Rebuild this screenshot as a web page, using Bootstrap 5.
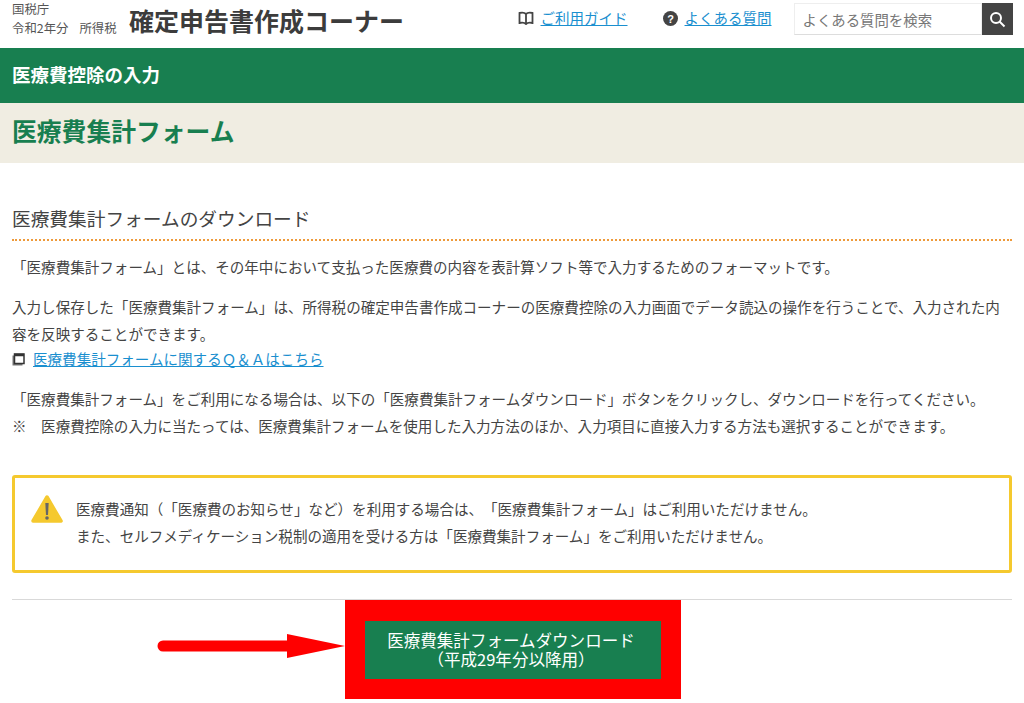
<!DOCTYPE html>
<html lang="ja">
<head>
    <meta charset="UTF-8">
    <meta name="viewport" content="width=device-width, initial-scale=1.0">
    <title>医療費集計フォーム</title>

    <link href="https://cdn.jsdelivr.net/npm/bootstrap@5.3.0/dist/css/bootstrap.min.css" rel="stylesheet">

    <style>
        body {
            font-family: "Noto Sans CJK JP", "Liberation Sans", sans-serif;
            font-size: 14.56px;
            color: #444;
            height: 703px;
            overflow: hidden;
            text-spacing-trim: space-all;
            font-feature-settings: "chws" 0, "palt" 0;
        }
        a { color: #1a8fcf; }
        .top-head { height: 48px; padding: 0 12px; }
        .agency { font-size: 12.4px; line-height: 19px; color: #555; width: 117px; flex-shrink: 0; }
        .agency span { margin-right: 11px; }
        .app-title { font-size: 25px; font-weight: 700; color: #3c3c3c; line-height: 1; padding-top: 8px; }
        .top-links { margin-left: 114px; font-size: 14.5px; margin-top: -12px; white-space: nowrap; column-gap: 6.5px; }
        .q-icon { margin-left: 29px; }
        .search-box { width: 219px; height: 32px; margin-left: 22px; margin-top: 3px; flex-shrink: 0; }
        .search-box input {
            border: 1px solid #eee; border-bottom-color: #ddd; border-radius: 0; font-size: 14.4px;
            height: 32px; padding: 0 8px; box-shadow: none;
        }
        .search-box input::placeholder { color: #777; }
        .search-btn { width: 31px; height: 32px; background: #444; flex-shrink: 0; border: 0; padding: 0; }
        .page-band { background: #187f50; color: #fff; height: 55px; font-size: 18.5px; font-weight: 700; padding: 0 12px 2px; }
        .title-band { background: #f0ede2; height: 60px; padding: 0 12px 4px; }
        .title-band h1 { font-size: 24.8px; font-weight: 700; color: #187f50; margin: 0; }
        .content-wrap { padding: 0 12px; }
        .sec-head {
            font-size: 18.7px; font-weight: 400; color: #444; margin: 41px 0 0;
            padding-bottom: 8px; line-height: 27px; border-bottom: 2px dotted #ee9a3a;
        }
        .lines { line-height: 26.5px; margin: 0; white-space: nowrap; }
        .para-a { margin-top: 13px; }
        .para-b { margin-top: 13.5px; }
        .para-c { margin-top: 13.5px; }
        .ref-link { margin-top: -1px; }
        .notice {
            border: 3px solid #f5c92e; border-radius: 3px; height: 98px; margin-top: 36px; padding: 17px 0 0 16px;
        }
        .notice svg { flex-shrink: 0; }
        .notice .lines { margin: 1px 0 0 13px; }
        .sep { border-top: 1px solid #d9d9d9; margin: 26px 0 0; }
        .dl-row { padding-left: 145px; }
        .arrow-mark { margin-bottom: 8px; }
        .red-frame { background: #f00; width: 336px; height: 99px; }
        .dl-btn {
            background: #187f50; color: #fff; width: 296px; height: 58px; border: 0; border-radius: 0;
            font-size: 16.55px; line-height: 19px; padding: 0 4px 0 0;
        }
        .dl-btn span { display: block; white-space: nowrap; }
    </style>
</head>
<body>

    <div class="top-head d-flex align-items-start">
        <div class="agency">
            <div>国税庁</div>
            <div class="text-nowrap"><span>令和2年分</span>所得税</div>
        </div>
        <div class="app-title text-nowrap">確定申告書作成コーナー</div>

        <div class="top-links d-flex align-items-center align-self-center">
            <svg width="16" height="14" viewBox="0 0 16 14" fill="none" stroke="#444" stroke-width="1.8"><path d="M8 3C6.500 1.500 4 1.500 1.500 2V12C4 11.500 6.500 11.500 8 13C9.500 11.500 12 11.500 14.500 12V2C12 1.500 9.500 1.500 8 3ZM8 3V13"/></svg>
            <a href="#">ご利用ガイド</a>
            <svg class="q-icon" width="15" height="15" viewBox="0 0 15 15"><circle cx="7.500" cy="7.500" r="7.500" fill="#444"/><text x="7.500" y="11.500" font-size="11" font-weight="700" fill="#fff" text-anchor="middle" font-family="Liberation Sans">?</text></svg>
            <a href="#">よくある質問</a>
        </div>

        <div class="search-box d-flex">
            <input type="text" class="form-control" placeholder="よくある質問を検索">
            <button class="search-btn d-flex align-items-center justify-content-center" type="button" aria-label="検索">
                <svg width="17" height="17" viewBox="0 0 17 17" fill="none" stroke="#fff" stroke-width="2"><circle cx="7" cy="7" r="5"/><path d="M10.500 10.500L15.500 15.500"/></svg>
            </button>
        </div>
    </div>

    <div class="page-band d-flex align-items-center">医療費控除の入力</div>
    <div class="title-band d-flex align-items-center">
        <h1>医療費集計フォーム</h1>
    </div>

    <div class="content-wrap">
        <h2 class="sec-head">医療費集計フォームのダウンロード</h2>

        <p class="lines para-a">「医療費集計フォーム」とは、その年中において支払った医療費の内容を表計算ソフト等で入力するためのフォーマットです。</p>

        <p class="lines para-b">入力し保存した「医療費集計フォーム」は、所得税の確定申告書作成コーナーの医療費控除の入力画面でデータ読込の操作を行うことで、入力された内<br>容を反映することができます。</p>
        <div class="d-flex align-items-center gap-2 lines ref-link">
            <svg width="13" height="13" viewBox="0 0 13 13" fill="none"><rect x="0.500" y="2.500" width="10" height="10" fill="#777"/><rect x="2.500" y="1" width="9.500" height="9.500" fill="#fff" stroke="#333" stroke-width="1.500"/><path d="M2 2H12" stroke="#333" stroke-width="2.500"/></svg>
            <a href="#">医療費集計フォームに関するＱ＆Ａはこちら</a>
        </div>

        <p class="lines para-c">「医療費集計フォーム」をご利用になる場合は、以下の「医療費集計フォームダウンロード」ボタンをクリックし、ダウンロードを行ってください。<br>※　医療費控除の入力に当たっては、医療費集計フォームを使用した入力方法のほか、入力項目に直接入力する方法も選択することができます。</p>

        <div class="notice d-flex align-items-start">
            <svg width="32" height="29" viewBox="0 0 32 29"><path d="M16 2L30 26H2Z" fill="#f5c92e" stroke="#f5c92e" stroke-width="3.500" stroke-linejoin="round"/><path d="M14.300 8H17.700L17 20H15Z" fill="#666"/><circle cx="16" cy="23" r="1.800" fill="#666"/></svg>
            <p class="lines">医療費通知（「医療費のお知らせ」など）を利用する場合は、「医療費集計フォーム」はご利用いただけません。<br>また、セルフメディケーション税制の適用を受ける方は「医療費集計フォーム」をご利用いただけません。</p>
        </div>

        <div class="sep"></div>

        <div class="dl-row d-flex align-items-center">
            <svg class="arrow-mark" width="188" height="26" viewBox="0 0 188 26"><path d="M6 13H132" stroke="#f00" stroke-width="11" stroke-linecap="round"/><path d="M130 1L188 13L130 25Z" fill="#f00"/></svg>
            <div class="red-frame d-flex align-items-center justify-content-center">
                <button class="dl-btn btn" type="button"><span>医療費集計フォームダウンロード</span><span>（平成29年分以降用）</span></button>
            </div>
        </div>
    </div>

    <script src="https://cdn.jsdelivr.net/npm/bootstrap@5.3.0/dist/js/bootstrap.bundle.min.js"></script>
</body>
</html>
